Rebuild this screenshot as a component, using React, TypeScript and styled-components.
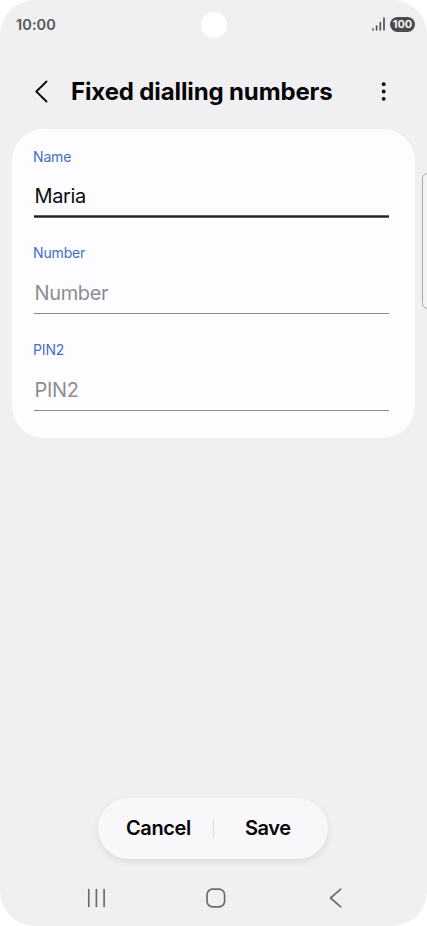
import React from "react";
import styled, { createGlobalStyle } from "styled-components";

const GlobalStyle = createGlobalStyle`
  * { box-sizing: border-box; }
  body { margin: 0; background: #fff; }
`;

const Screen = styled.div`
  position: relative;
  display: flex;
  flex-direction: column;
  width: 427px;
  height: 926px;
  overflow: hidden;
  background: #f0f0f2;
  border-radius: 35px;
  font-family: Inter, Roboto, sans-serif;
  color: #050506;
`;

const StatusBar = styled.div`
  display: grid;
  grid-template-columns: 1fr 26px 1fr;
  align-items: center;
  height: 50px;
  flex: none;
  padding: 0 12px 0 16px;
`;

const Clock = styled.span`
  font-size: 14.5px;
  font-weight: 600;
  letter-spacing: 0.1px;
  line-height: 20px;
  color: #57575a;
  margin-top: -1px;
`;

const Camera = styled.div`
  width: 26px;
  height: 26px;
  margin-left: -2px;
  border-radius: 50%;
  background: #fff;
`;

const StatusIcons = styled.div`
  display: flex;
  justify-content: flex-end;
  align-items: center;
  gap: 5px;
  margin-top: -2px;
`;

const Battery = styled.span`
  width: 25px;
  height: 15px;
  border-radius: 8px;
  background: #4b4b4e;
  color: #f4f4f5;
  font-size: 11px;
  font-weight: 700;
  line-height: 15px;
  text-align: center;
`;

const Header = styled.header`
  display: flex;
  align-items: center;
  height: 79px;
  flex: none;
  padding: 4px 37px 0 34px;
`;

const Title = styled.h1`
  flex: 1;
  margin: 1px 0 0 22px;
  font-size: 24px;
  font-weight: 700;
  line-height: 32px;
  letter-spacing: -0.13px;
  white-space: nowrap;
`;

const Card = styled.main`
  display: flex;
  flex-direction: column;
  gap: 26px;
  flex: none;
  height: 308.5px;
  padding: 18px 26px 0 22px;
  margin: 0 12px;
  border-radius: 32px;
  background: #fdfdff;
`;

const Label = styled.div`
  margin-left: -1px;
  font-size: 14px;
  line-height: 20px;
  letter-spacing: -0.15px;
  color: #426fc5;
`;

const Value = styled.div<{ $filled?: boolean }>`
  height: ${(p) => (p.$filled ? 50 : 51)}px;
  padding: ${(p) => (p.$filled ? 15 : 15.5)}px 0 0 0.5px;
  font-size: 20px;
  line-height: 28px;
  letter-spacing: -0.35px;
  color: ${(p) => (p.$filled ? "#0c0c0e" : "#8e8e91")};
  border-bottom: 1px solid ${(p) => (p.$filled ? "#1e1e23" : "#8c8c90")};
  box-shadow: ${(p) => (p.$filled ? "inset 0 -1px #606064, 0 1px #606064" : "none")};
`;

const EdgeHandle = styled.div`
  position: absolute;
  top: 173px;
  right: -6px;
  width: 11px;
  height: 136px;
  border: 1px solid #ababae;
  border-radius: 6px;
  background: #f3f3f5;
`;

const Spacer = styled.div`
  flex: 1;
`;

const Actions = styled.div`
  display: flex;
  align-items: center;
  flex: none;
  width: 230px;
  height: 61px;
  margin: 0 0 9px 98px;
  padding-bottom: 1px;
  border-radius: 31px;
  background: #f8f8fa;
  box-shadow: 0 3px 7px rgba(0, 0, 0, 0.09);
`;

const Action = styled.button<{ $width: number; $indent: number }>`
  width: ${(p) => p.$width}px;
  padding: 0 0 0 ${(p) => p.$indent}px;
  border: 0;
  background: none;
  color: inherit;
  font: 600 20px/28px Inter, Roboto, sans-serif;
  letter-spacing: -0.4px;
  text-align: left;
`;

const Divider = styled.div`
  width: 1px;
  height: 19px;
  background: #dcdcdf;
`;

const NavBar = styled.nav`
  display: flex;
  align-items: center;
  gap: 100px;
  height: 58px;
  flex: none;
  padding: 1px 0 0 86px;
`;

const Icon = styled.svg`
  display: block;
  flex: none;
  fill: none;
  stroke-linecap: round;
  stroke-linejoin: round;
`;

const FormField = ({ label, value }: { label: string; value?: string }) => (
  <section>
    <Label>{label}</Label>
    <Value $filled={!!value}>{value || label}</Value>
  </section>
);

export default function App() {
  return (
    <>
      <GlobalStyle />
      <Screen>
        <StatusBar>
          <Clock>10:00</Clock>
          <Camera />
          <StatusIcons>
            <Icon width="13" height="14" stroke="#555558" strokeWidth="1.7">
              <path d="M1 12v.8M4.6 9v3.8M8.3 5.5v7.3M12 1.2v11.6" />
            </Icon>
            <Battery>100</Battery>
          </StatusIcons>
        </StatusBar>
        <Header>
          <Icon width="15" height="24" stroke="#080809" strokeWidth="1.8">
            <path d="M12.5 1.5 2.3 11.5l10.2 10" />
          </Icon>
          <Title>Fixed dialling numbers</Title>
          <Icon width="12" height="24">
            <g fill="#080809">
              <circle cx="5.7" cy="4.2" r="1.9" />
              <circle cx="5.7" cy="11.5" r="1.9" />
              <circle cx="5.7" cy="18.8" r="1.9" />
            </g>
          </Icon>
        </Header>
        <Card>
          <FormField label="Name" value="Maria" />
          <FormField label="Number" />
          <FormField label="PIN2" />
        </Card>
        <Spacer />
        <Actions>
          <Action $width={115} $indent={28}>Cancel</Action>
          <Divider />
          <Action $width={114} $indent={31}>Save</Action>
        </Actions>
        <NavBar>
          <Icon width="20" height="20" stroke="#6c6c6f" strokeWidth="1.7">
            <path d="M2.8 1.5v17M10.4 1.5v17M18.1 1.5v17" />
          </Icon>
          <Icon width="20" height="20" stroke="#6c6c6f" strokeWidth="1.7">
            <rect x="1" y="1.2" width="17.6" height="17.6" rx="5.5" />
          </Icon>
          <Icon width="20" height="20" stroke="#6c6c6f" strokeWidth="1.7">
            <path d="M14.7 1.2 4.5 10l10.2 8.8" />
          </Icon>
        </NavBar>
        <EdgeHandle />
      </Screen>
    </>
  );
}
